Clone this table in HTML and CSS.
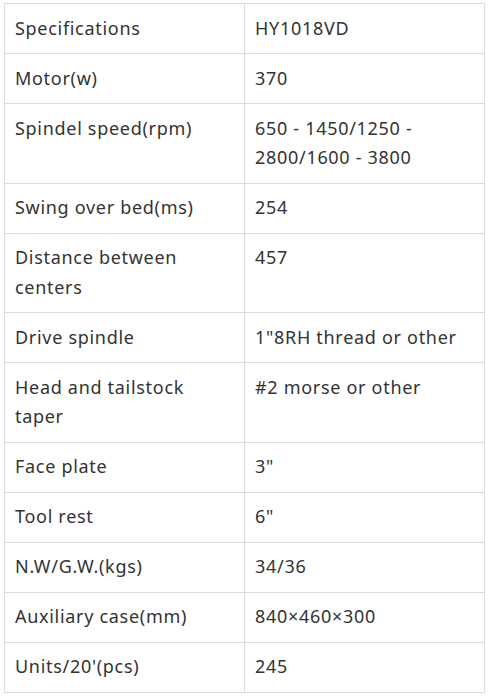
FILE: index.html
```html
<!DOCTYPE html>
<html>
<head>
<meta charset="utf-8">
<link rel="stylesheet" href="styles.css">
</head>
<body>
<table class="spec">
<tbody>
<tr><td>Specifications</td><td>HY1018VD</td></tr>
<tr><td>Motor(w)</td><td>370</td></tr>
<tr><td>Spindel speed(rpm)</td><td>650 - 1450/1250 - 2800/1600 - 3800</td></tr>
<tr><td>Swing over bed(ms)</td><td>254</td></tr>
<tr><td>Distance between centers</td><td>457</td></tr>
<tr><td>Drive spindle</td><td>1"8RH thread or other</td></tr>
<tr><td>Head and tailstock taper</td><td>#2 morse or other</td></tr>
<tr><td>Face plate</td><td>3"</td></tr>
<tr><td>Tool rest</td><td>6"</td></tr>
<tr><td>N.W/G.W.(kgs)</td><td>34/36</td></tr>
<tr><td>Auxiliary case(mm)</td><td>840×460×300</td></tr>
<tr><td>Units/20'(pcs)</td><td>245</td></tr>
</tbody>
</table>
</body>
</html>
```
FILE: styles.css
```css
html, body {
  margin: 0;
  padding: 0;
  background: #fff;
}
body {
  padding: 3px 4px;
  font-family: "Noto Sans", "Noto Sans CJK SC", sans-serif;
  font-size: 18px;
  letter-spacing: 0.7px;
  color: #333;
}
.spec {
  border-collapse: collapse;
  width: 481px;
  table-layout: fixed;
}
.spec td {
  border: 1px solid #dcdcdc;
  padding: 9.75px 10px;
  line-height: 29.5px;
  vertical-align: top;
  width: 50%;
}
```
